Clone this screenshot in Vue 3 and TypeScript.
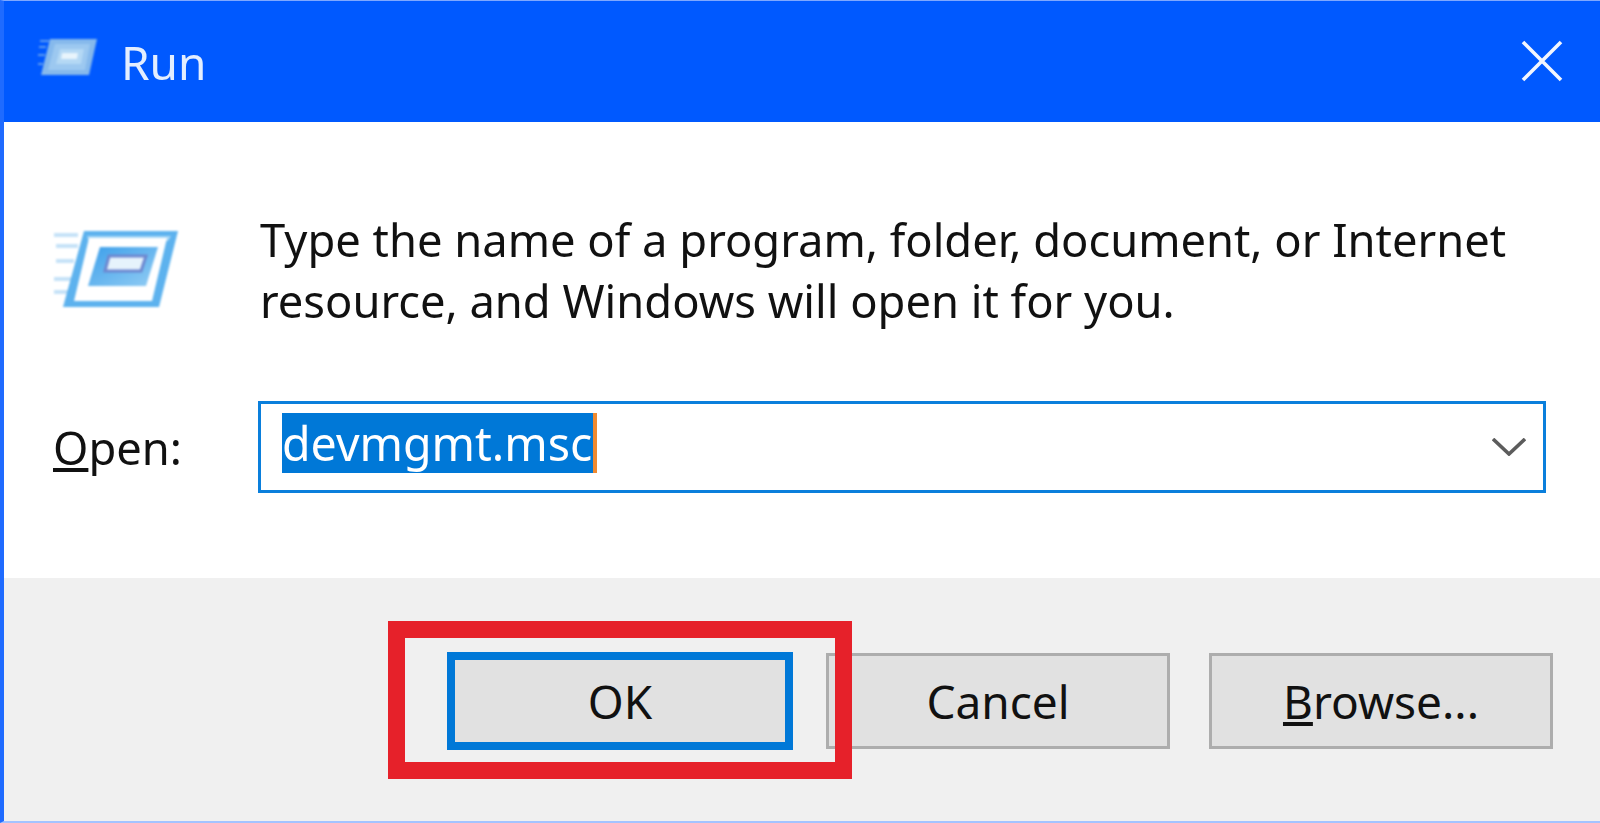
<template>
  <div class="run-dialog">
    <header class="titlebar">
      <svg class="title-icon" viewBox="0 0 70 50" aria-hidden="true">
        <path d="M2 4h9M1 10h7M0 18h7M0 27h5" stroke="#5f9cf0" stroke-width="2" fill="none" />
        <path d="M12 2h47l-8 36H3z" fill="#86b9ec" />
        <path d="M17 7h35l-5 26H10z" fill="#9cc8f0" />
        <path d="M22 12h24l-3 15H18z" fill="#b4d8f4" />
        <path d="M24 16h16l-1 6H23z" fill="#e8f4fc" />
      </svg>
      <span class="title">Run</span>
      <svg class="close" viewBox="0 0 42 42" aria-hidden="true">
        <path d="M2 2l38 38M40 2L2 40" stroke="#f2f6ff" stroke-width="3.6" fill="none" />
      </svg>
    </header>

    <main class="content">
      <div class="intro">
        <svg class="app-icon" viewBox="0 0 130 84" aria-hidden="true">
          <defs>
            <linearGradient id="screen-fill" x1="0" y1="0" x2="1" y2="1">
              <stop offset="0" stop-color="#3c9fea" />
              <stop offset="1" stop-color="#93cdf4" />
            </linearGradient>
          </defs>
          <path d="M1 6h24M3 17h22M3 32h18M1 50h20M1 63h14" stroke="#c5e2f8" stroke-width="4" fill="none" />
          <path d="M31 2h94l-19 76H10z" fill="#5db2ee" />
          <path d="M34 7h84l-3 5-79 1z" fill="#a9d8f7" />
          <path d="M36 9h78l-15 63H21z" fill="#ffffff" />
          <path d="M47 18h58l-12 39H35z" fill="url(#screen-fill)" />
          <path d="M56 27h37l-5 15H52z" fill="#e6f3fc" stroke="#6d87cf" stroke-width="3" />
        </svg>
        <p class="message">
          Type the name of a program, folder, document, or Internet<br />
          resource, and Windows will open it for you.
        </p>
      </div>
      <div class="open-row">
        <label class="open-label"><u>O</u>pen:</label>
        <div class="combo">
          <span class="selection">devmgmt.msc</span>
          <svg class="chevron" viewBox="0 0 34 18" aria-hidden="true">
            <path d="M1 1l16 15L33 1" stroke="#5c5c5c" stroke-width="3.6" fill="none" />
          </svg>
        </div>
      </div>
    </main>

    <footer class="actions">
      <button class="btn btn-default">
        OK
        <span class="highlight"></span>
      </button>
      <button class="btn">Cancel</button>
      <button class="btn"><u>B</u>rowse...</button>
    </footer>
  </div>
</template>

<script setup lang="ts">
</script>

<style>
html,
body {
  margin: 0;
  overflow: hidden;
}
</style>

<style scoped>
.run-dialog {
  width: 1600px;
  height: 823px;
  box-sizing: border-box;
  display: flex;
  flex-direction: column;
  background: #fff;
  border-left: 4px solid #1f6bff;
  border-top: 1px solid #7fa8ff;
  border-bottom: 2px solid #a3c3ff;
  font-family: "Noto Sans", "Open Sans", sans-serif;
  color: #111;
}
.titlebar {
  height: 121px;
  flex: none;
  display: flex;
  align-items: center;
  padding: 0 37px 0 34px;
  background: #0059ff;
}
.title-icon {
  width: 70px;
  height: 50px;
  filter: blur(1px);
}
.title {
  margin-left: 13px;
  font-size: 46px;
  line-height: 1;
  color: #e3eeff;
  filter: blur(0.6px);
}
.close {
  width: 42px;
  height: 42px;
  margin-left: auto;
  margin-top: -2px;
  filter: blur(0.5px);
}
.content {
  flex: 1;
  display: flex;
  flex-direction: column;
  padding: 0 54px 0 49px;
}
.intro {
  display: flex;
  align-items: flex-start;
  margin-top: 87px;
}
.app-icon {
  width: 130px;
  height: 84px;
  margin-top: 20px;
  flex: none;
  filter: blur(1px);
}
.message {
  margin: 0 0 0 77px;
  font-size: 45.3px;
  line-height: 61px;
  white-space: nowrap;
  filter: blur(0.6px);
}
.open-row {
  display: flex;
  align-items: center;
  margin-top: 70px;
}
.open-label {
  width: 205px;
  flex: none;
  font-size: 45.3px;
  filter: blur(0.6px);
}
.combo {
  flex: 1;
  height: 92px;
  box-sizing: border-box;
  display: flex;
  align-items: center;
  justify-content: space-between;
  padding: 0 17px 0 21px;
  border: 3px solid #0a7fdc;
}
.selection {
  height: 60px;
  margin-top: -9px;
  padding-right: 1px;
  display: flex;
  align-items: center;
  font-size: 46.5px;
  color: #fff;
  background: #0078d7;
  border-right: 4px solid #f08a30;
  filter: blur(0.4px);
}
.chevron {
  width: 34px;
  height: 18px;
  filter: blur(0.5px);
}
.actions {
  height: 243px;
  flex: none;
  display: flex;
  gap: 39px;
  padding: 75px 47px 0 0;
  box-sizing: border-box;
  justify-content: flex-end;
  background: #f0f0f0;
}
.btn {
  position: relative;
  width: 344px;
  height: 96px;
  padding: 0;
  font: inherit;
  font-size: 46px;
  color: #111;
  background: #e1e1e1;
  border: 3px solid #adadad;
}
.btn-default {
  z-index: 1;
  width: 346px;
  height: 98px;
  margin-top: -1px;
  margin-right: -6px;
  border: 8px solid #0078d7;
}
.highlight {
  position: absolute;
  left: -67px;
  top: -39px;
  width: 430px;
  height: 124px;
  border: 17px solid #e6212a;
}
</style>
